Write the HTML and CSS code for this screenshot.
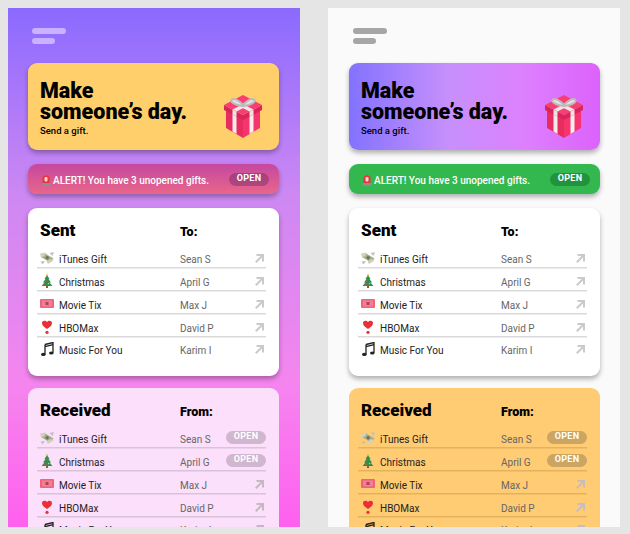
FILE: index.html
```html
<!DOCTYPE html>
<html lang="en">
<head>
    <meta charset="UTF-8">
    <meta name="viewport" content="width=device-width, initial-scale=1.0">
    <title>Gifts</title>
    <link rel="stylesheet" href="styles.css">
</head>
<body>

<!-- Shared icons -->
<svg class="icon-defs" aria-hidden="true">
    <symbol id="gift" viewBox="0 0 38 43">
        <path d="M2 14 19 23V43L2 33Z" fill="#e92c5f"/>
        <path d="M36 14 19 23V43L36 33Z" fill="#f7346d"/>
        <path d="M8.500 17 12.500 19.500V39L8.500 36.500Z" fill="#f5e9ea"/>
        <path d="M29.500 17 25.500 19.500V39L29.500 36.500Z" fill="#f8eeee"/>
        <path d="M0 10 19 20 38 10V15L19 25 0 15Z" fill="#d92658"/>
        <path d="M8.500 14.500 12.500 16.500V21.500L8.500 19.500ZM29.500 14.500 25.500 16.500V21.500L29.500 19.500Z" fill="#efe4e4"/>
        <path d="M19 0 38 10 19 20 0 10Z" fill="#f83f74"/>
        <path d="M8.500 14.500 12.500 16.500 31 7 27 5Z" fill="#f1e6e6"/>
        <path d="M29.500 14.500 25.500 16.500 7 7 11 5Z" fill="#f1e6e6"/>
        <path d="M19 9.500C14 5 10 3 8 4.500 5.500 6.500 10 10 19 11 28 10 32.500 6.500 30 4.500 28 3 24 5 19 9.500Z" fill="#e4e0e0" stroke="#bdb9b9" stroke-width="2"/>
    </symbol>
    <symbol id="siren" viewBox="0 0 10 12">
        <path d="M1.500 9.500V4C1.500 .2 8.500 .2 8.500 4V9.500Z" fill="#e8343c"/>
        <rect x=".5" y="9" width="9" height="3" rx=".7" fill="#8d8d96"/>
        <rect x="3.500" y="3" width="3" height="4.500" rx="1" fill="#fbd3d3"/>
    </symbol>
    <symbol id="money" viewBox="0 0 14 14">
        <path d="M1 6 4.500 2 13.500 7.500 10 11.500Z" fill="#a3b08e"/>
        <path d="M0 2.500 5.500 1.500 4.500 5 1 6.500ZM8 13 13.500 9.500 10.500 8 6.500 10.500Z" fill="#d5cfbb"/>
        <path d="M5 10 2.500 13.500 .5 10.500ZM9.500 2 14 1 12.500 5Z" fill="#c3c2b2"/>
        <circle cx="7.200" cy="6.700" r="1.700" fill="#66785a"/>
    </symbol>
    <symbol id="tree" viewBox="0 0 14 14">
        <rect x="6" y="11.500" width="2" height="2.500" fill="#8a5a3a"/>
        <path d="M7 1 9.500 5H8.500L11 8.500H9.500L12.500 12H1.500L4.500 8.500H3L5.500 5H4.500Z" fill="#2f8f4c"/>
        <circle cx="7" cy="1.200" r="1" fill="#f0b429"/>
        <circle cx="6" cy="6" r=".7" fill="#e9474f"/>
        <circle cx="8.500" cy="9.500" r=".7" fill="#e9c54f"/>
        <circle cx="5" cy="10.300" r=".7" fill="#e9474f"/>
    </symbol>
    <symbol id="ticket" viewBox="0 0 14 14">
        <rect y="2" width="14" height="9" rx="1" fill="#f0637d"/>
        <rect x="2" y="3.500" width="10" height="6" fill="#f27e92"/>
        <rect x="5.500" y="5" width="3" height="3" fill="#a8455b"/>
    </symbol>
    <symbol id="heart" viewBox="0 0 14 14">
        <path d="M7 9C4 7 2 5.500 2 3.200 2 .500 5.800 0 7 2.300 8.200 0 12 .500 12 3.200 12 5.500 10 7 7 9Z" fill="#ea2f37"/>
        <circle cx="7" cy="12.300" r="1.600" fill="#ea2f37"/>
    </symbol>
    <symbol id="notes" viewBox="0 0 14 14">
        <path d="M5 2.500 13 .5V10.800M5 2.500V12.500M5 4.700 13 2.700" fill="none" stroke="#222" stroke-width="1.300"/>
        <ellipse cx="3.300" cy="12.400" rx="2.300" ry="1.600" fill="#222"/>
        <ellipse cx="11.300" cy="11" rx="2.300" ry="1.600" fill="#222"/>
    </symbol>
    <symbol id="arrow" viewBox="0 0 9 9">
        <path d="M1.500 1H8V7.500M8 1 .8 8.200" fill="none" stroke="currentColor" stroke-width="2"/>
    </symbol>
</svg>

<!-- Purple version -->
<main class="phone phone-purple">
    <div class="menu"><span></span><span></span></div>

    <section class="hero">
        <div>
            <h1>Make<br>someone’s day.</h1>
            <p>Send a gift.</p>
        </div>
        <svg class="gift"><use href="#gift"/></svg>
    </section>

    <section class="alert">
        <svg class="siren"><use href="#siren"/></svg>
        <span class="alert-text">ALERT! You have 3 unopened gifts.</span>
        <span class="pill">OPEN</span>
    </section>

    <section class="card">
        <div class="card-head"><h2>Sent</h2><h3>To:</h3></div>
        <div class="row"><svg class="emoji"><use href="#money"/></svg><span class="name">iTunes Gift</span><span class="who">Sean S</span><svg class="arrow"><use href="#arrow"/></svg></div>
        <div class="row"><svg class="emoji"><use href="#tree"/></svg><span class="name">Christmas</span><span class="who">April G</span><svg class="arrow"><use href="#arrow"/></svg></div>
        <div class="row"><svg class="emoji"><use href="#ticket"/></svg><span class="name">Movie Tix</span><span class="who">Max J</span><svg class="arrow"><use href="#arrow"/></svg></div>
        <div class="row"><svg class="emoji"><use href="#heart"/></svg><span class="name">HBOMax</span><span class="who">David P</span><svg class="arrow"><use href="#arrow"/></svg></div>
        <div class="row"><svg class="emoji"><use href="#notes"/></svg><span class="name">Music For You</span><span class="who">Karim I</span><svg class="arrow"><use href="#arrow"/></svg></div>
    </section>

    <section class="card card-received">
        <div class="card-head"><h2>Received</h2><h3>From:</h3></div>
        <div class="row"><svg class="emoji"><use href="#money"/></svg><span class="name">iTunes Gift</span><span class="who">Sean S</span><span class="pill">OPEN</span></div>
        <div class="row"><svg class="emoji"><use href="#tree"/></svg><span class="name">Christmas</span><span class="who">April G</span><span class="pill">OPEN</span></div>
        <div class="row"><svg class="emoji"><use href="#ticket"/></svg><span class="name">Movie Tix</span><span class="who">Max J</span><svg class="arrow"><use href="#arrow"/></svg></div>
        <div class="row"><svg class="emoji"><use href="#heart"/></svg><span class="name">HBOMax</span><span class="who">David P</span><svg class="arrow"><use href="#arrow"/></svg></div>
        <div class="row"><svg class="emoji"><use href="#notes"/></svg><span class="name">Music For You</span><span class="who">Karim I</span><svg class="arrow"><use href="#arrow"/></svg></div>
    </section>
</main>

<!-- Light version -->
<main class="phone phone-light">
    <div class="menu"><span></span><span></span></div>

    <section class="hero">
        <div>
            <h1>Make<br>someone’s day.</h1>
            <p>Send a gift.</p>
        </div>
        <svg class="gift"><use href="#gift"/></svg>
    </section>

    <section class="alert">
        <svg class="siren"><use href="#siren"/></svg>
        <span class="alert-text">ALERT! You have 3 unopened gifts.</span>
        <span class="pill">OPEN</span>
    </section>

    <section class="card">
        <div class="card-head"><h2>Sent</h2><h3>To:</h3></div>
        <div class="row"><svg class="emoji"><use href="#money"/></svg><span class="name">iTunes Gift</span><span class="who">Sean S</span><svg class="arrow"><use href="#arrow"/></svg></div>
        <div class="row"><svg class="emoji"><use href="#tree"/></svg><span class="name">Christmas</span><span class="who">April G</span><svg class="arrow"><use href="#arrow"/></svg></div>
        <div class="row"><svg class="emoji"><use href="#ticket"/></svg><span class="name">Movie Tix</span><span class="who">Max J</span><svg class="arrow"><use href="#arrow"/></svg></div>
        <div class="row"><svg class="emoji"><use href="#heart"/></svg><span class="name">HBOMax</span><span class="who">David P</span><svg class="arrow"><use href="#arrow"/></svg></div>
        <div class="row"><svg class="emoji"><use href="#notes"/></svg><span class="name">Music For You</span><span class="who">Karim I</span><svg class="arrow"><use href="#arrow"/></svg></div>
    </section>

    <section class="card card-received">
        <div class="card-head"><h2>Received</h2><h3>From:</h3></div>
        <div class="row"><svg class="emoji"><use href="#money"/></svg><span class="name">iTunes Gift</span><span class="who">Sean S</span><span class="pill">OPEN</span></div>
        <div class="row"><svg class="emoji"><use href="#tree"/></svg><span class="name">Christmas</span><span class="who">April G</span><span class="pill">OPEN</span></div>
        <div class="row"><svg class="emoji"><use href="#ticket"/></svg><span class="name">Movie Tix</span><span class="who">Max J</span><svg class="arrow"><use href="#arrow"/></svg></div>
        <div class="row"><svg class="emoji"><use href="#heart"/></svg><span class="name">HBOMax</span><span class="who">David P</span><svg class="arrow"><use href="#arrow"/></svg></div>
        <div class="row"><svg class="emoji"><use href="#notes"/></svg><span class="name">Music For You</span><span class="who">Karim I</span><svg class="arrow"><use href="#arrow"/></svg></div>
    </section>
</main>

</body>
</html>
```

FILE: styles.css
```css
/* General */
html,
body {
    height: 100%;
}

body {
    margin: 0;
    padding: 8px;
    box-sizing: border-box;
    display: flex;
    gap: 28px;
    overflow: hidden;
    background-color: #e5e5e5;
    font-family: Roboto, "Liberation Sans", sans-serif;
    color: #000;
}

h1,
h2,
h3,
p {
    margin: 0;
}

.icon-defs {
    display: none;
}

/* Phone frames */
.phone {
    flex: none;
    width: 292px;
    height: 519px;
    box-sizing: border-box;
    padding: 20px 21px 0 20px;
    overflow: hidden;
}

.phone-purple {
    background: linear-gradient(to bottom, #8b6aff, #cd88f2 36%, #f585ee 72%, #ff60ee);
    --bar: #c9b2ff;
    --hero: #ffcf6b;
    --alert: linear-gradient(to bottom, #c4489f, #e9668a);
    --alert-pill: rgba(90, 30, 90, 0.35);
    --received: #fcdffb;
    --received-line: #d8c3d8;
    --received-pill: #d0b6ce;
    --received-arrow: #c4b8c2;
}

.phone-light {
    padding: 20px 20px 0 21px;
    background-color: #fafafa;
    --bar: #a6a6a6;
    --hero: linear-gradient(to right, #8272ff, #c790fb 40%, #dd80ff 70%, #dc62fb);
    --alert: #33b84f;
    --alert-pill: rgba(0, 60, 20, 0.3);
    --received: #ffcb73;
    --received-line: #e3b25f;
    --received-pill: #cba561;
    --received-arrow: #c5bdc0;
}

/* Menu */
.menu {
    display: flex;
    flex-direction: column;
    gap: 4px;
    margin: 0 0 19px 3.500px;
}

.menu span {
    width: 34px;
    height: 6px;
    border-radius: 3px;
    background-color: var(--bar);
}

.menu span:last-child {
    width: 23px;
}

/* Hero */
.hero {
    display: flex;
    justify-content: space-between;
    align-items: flex-end;
    height: 87px;
    box-sizing: border-box;
    padding: 17px 17px 13px 12px;
    border-radius: 9px;
    background: var(--hero);
    box-shadow: 0 3px 5px rgba(0, 0, 0, 0.3);
}

.hero h1 {
    font-size: 21.500px;
    line-height: 21px;
    font-weight: 900;
}

.hero p {
    margin-top: 3px;
    font-size: 9.500px;
    line-height: 12px;
    font-weight: 500;
}

.gift {
    width: 38px;
    height: 43px;
    margin-bottom: -1px;
}

/* Alert */
.alert {
    display: flex;
    align-items: center;
    height: 30px;
    box-sizing: border-box;
    margin-top: 14px;
    padding: 1px 10px 0 13px;
    border-radius: 9px;
    background: var(--alert);
    box-shadow: 0 3px 5px rgba(0, 0, 0, 0.3);
    color: #fff;
}

.siren {
    width: 10px;
    height: 12px;
    margin-right: 2px;
}

.alert-text {
    flex: 1;
    margin-top: 1px;
    font-size: 10px;
    font-weight: 500;
}

.pill {
    width: 40px;
    height: 13px;
    border-radius: 7px;
    text-align: center;
    font-size: 9px;
    line-height: 11.500px;
    font-weight: 700;
    letter-spacing: 0.3px;
    color: #fff;
}

.alert .pill {
    background-color: var(--alert-pill);
}

/* Cards */
.card {
    margin-top: 14px;
    height: 168px;
    box-sizing: border-box;
    padding: 11px 13px 0 9px;
    border-radius: 9px;
    background-color: #fff;
    box-shadow: 0 3px 5px rgba(0, 0, 0, 0.3);
    --line: #dadada;
    --arrow: #cacaca;
}

.card-received {
    margin-top: 12px;
    height: 200px;
    background-color: var(--received);
    box-shadow: none;
    --line: var(--received-line);
    --arrow: var(--received-arrow);
}

.card-head {
    display: flex;
    align-items: baseline;
    height: 25.500px;
    padding-left: 3px;
}

.card-head h2 {
    width: 140px;
    font-size: 17px;
    line-height: 22px;
    font-weight: 900;
}

.card-head h3 {
    font-size: 12.500px;
    font-weight: 900;
}

.row {
    display: flex;
    align-items: flex-end;
    height: 23px;
    box-sizing: border-box;
    padding: 0 0 1px 3px;
    border-bottom: 1px solid var(--line);
    box-shadow: 0 0.500px 0 var(--line);
    font-size: 10px;
    line-height: 13px;
}

.row:last-child {
    padding-bottom: 3px;
    border-bottom: none;
    box-shadow: none;
}

.emoji {
    flex: none;
    width: 14px;
    height: 14px;
    margin: 0 5px 1px 0;
}

.name {
    width: 121px;
    color: #222;
}

.who {
    flex: 1;
    color: #666;
}

.arrow {
    flex: none;
    width: 9px;
    height: 9px;
    margin: 0 2.500px 3px 0;
    color: var(--arrow);
}

.row .pill {
    margin: 0 0 2px;
    background-color: var(--received-pill);
}
```
